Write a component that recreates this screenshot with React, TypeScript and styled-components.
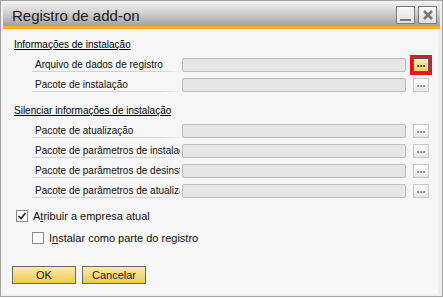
import * as React from 'react';
import styled, { createGlobalStyle } from 'styled-components';

const GlobalStyle = createGlobalStyle`
    html, body {
        margin: 0;
        padding: 0;
        background: #ffffff;
    }
    * {
        box-sizing: border-box;
    }
`

const Window = styled.div`
    width: 443px;
    height: 297px;
    border: 1px solid #a2a2a2;
    padding: 2px;
    background: #f1f1f1;
    display: flex;
    flex-direction: column;
    font-family: "Liberation Sans", Arial, sans-serif;
    font-size: 10px;
    color: #111;
`

const TitleBar = styled.div`
    height: 23px;
    display: flex;
    align-items: center;
    justify-content: space-between;
    padding: 0 3px 0 9px;
    background: linear-gradient(to bottom, #eeeeee 0%, #cfcfcf 45%, #a0a0a0 100%);
`

const Title = styled.div`
    font-size: 15px;
    color: #1c1c1c;
    padding-top: 1px;
`

const Controls = styled.div`
    display: flex;
    gap: 3px;
`

const CtrlButton = styled.div`
    width: 19px;
    height: 18px;
    border: 1px solid #7c7c7c;
    background: linear-gradient(to bottom, #fafafa, #dedede);
    display: flex;
    align-items: center;
    justify-content: center;
`

const Accent = styled.div`
    height: 3px;
    background: #f4b21b;
`

const Content = styled.div`
    flex: 1;
    background: #f6f6f6;
    border-right: 2px solid #ececec;
    padding: 9px 0 0 11px;
`

const SectionHeader = styled.div<{ $first?: boolean }>`
    height: 14px;
    line-height: 14px;
    text-decoration: underline;
    color: #000;
    margin-top: ${(p) => (p.$first ? 0 : 9)}px;
    margin-bottom: 3px;
`

const Row = styled.div`
    height: 20px;
    display: flex;
    align-items: center;
    margin-left: 18px;
`

const Label = styled.div`
    width: 148px;
    height: 14px;
    line-height: 13px;
    padding: 0 2px 0 3px;
    white-space: nowrap;
    overflow: hidden;
    color: #111;
    border-bottom: 1px solid;
    border-image: linear-gradient(to right, #d2d2d2 85%, rgba(210, 210, 210, 0)) 1;
`

const Field = styled.div`
    width: 224px;
    height: 14px;
    margin-left: 2px;
    border: 1px solid #bcbcbc;
    border-radius: 2px;
    background: #e6e6e6;
`

const BrowseButton = styled.div<{ $active?: boolean }>`
    width: 16px;
    height: 14px;
    margin-left: 7px;
    display: flex;
    align-items: center;
    justify-content: center;
    padding-top: 2px;
    border: 1px solid ${(p) => (p.$active ? '#5f5f5f' : '#c8c8c8')};
    background: ${(p) =>
        p.$active
            ? 'linear-gradient(to bottom, #fbeeb8, #f1cf62)'
            : 'linear-gradient(to bottom, #ffffff, #e6e6e6)'};
    outline: ${(p) => (p.$active ? '3px solid #e8141c' : 'none')};
`

const CheckRow = styled.div<{ $indent: number }>`
    height: 14px;
    display: flex;
    align-items: center;
    gap: 5px;
    margin-top: 8px;
    margin-left: ${(p) => p.$indent}px;
`

const Box = styled.div`
    width: 12px;
    height: 12px;
    border: 1px solid #8a8a8a;
    background: #ffffff;
    display: flex;
    align-items: center;
    justify-content: center;
`

const CheckLabel = styled.span`
    font-size: 11px;
    color: #111;
    u {
        text-decoration: underline;
    }
`

const Footer = styled.div`
    display: flex;
    gap: 6px;
    margin: 21px 0 0 -2px;
`

const ActionButton = styled.div`
    width: 64px;
    height: 18px;
    border: 1px solid #686868;
    background: linear-gradient(to bottom, #fbeaa9, #f0c955);
    display: flex;
    align-items: center;
    justify-content: center;
    font-size: 11px;
    color: #1a1a1a;
`

const Dots: React.FC<{ active?: boolean }> = ({ active }) => (
    <svg width="9" height="2" viewBox="0 0 9 2">
        {[0, 3, 6].map((x) => (
            <g key={x}>
                <rect x={x} y="0" width="1" height="2" fill={active ? '#9a3a3a' : '#b08a96'} />
                <rect x={x + 1} y="0" width="1" height="2" fill={active ? '#4a4a7a' : '#8a90b0'} />
            </g>
        ))}
    </svg>
)

const Browse: React.FC<{ active?: boolean }> = ({ active }) => (
    <BrowseButton $active={active}>
        <Dots active={active} />
    </BrowseButton>
)

const FieldRow: React.FC<{ label: string; active?: boolean }> = ({ label, active }) => (
    <Row>
        <Label>{label}</Label>
        <Field />
        <Browse active={active} />
    </Row>
)

export default function App() {
    return (
        <>
            <GlobalStyle />
            <Window>
                <TitleBar>
                    <Title>Registro de add-on</Title>
                    <Controls>
                        <CtrlButton>
                            <svg width="13" height="14" viewBox="0 0 13 14">
                                <rect x="1" y="11" width="11" height="2" fill="#777" />
                            </svg>
                        </CtrlButton>
                        <CtrlButton>
                            <svg width="12" height="12" viewBox="0 0 12 12">
                                <path d="M2 2 L10 10 M10 2 L2 10" stroke="#777" strokeWidth="2.6" />
                            </svg>
                        </CtrlButton>
                    </Controls>
                </TitleBar>
                <Accent />
                <Content>
                    <SectionHeader $first>Informações de instalação</SectionHeader>
                    <FieldRow label="Arquivo de dados de registro" active />
                    <FieldRow label="Pacote de instalação" />

                    <SectionHeader>Silenciar informações de instalação</SectionHeader>
                    <FieldRow label="Pacote de atualização" />
                    <FieldRow label="Pacote de parâmetros de instalação" />
                    <FieldRow label="Pacote de parâmetros de desinstalação" />
                    <FieldRow label="Pacote de parâmetros de atualização" />

                    <CheckRow $indent={2}>
                        <Box>
                            <svg width="10" height="10" viewBox="0 0 10 10">
                                <path d="M1.5 5 L4 7.5 L8.5 2" fill="none" stroke="#222" strokeWidth="1.6" />
                            </svg>
                        </Box>
                        <CheckLabel>A<u>t</u>ribuir a empresa atual</CheckLabel>
                    </CheckRow>
                    <CheckRow $indent={18}>
                        <Box />
                        <CheckLabel>I<u>n</u>stalar como parte do registro</CheckLabel>
                    </CheckRow>

                    <Footer>
                        <ActionButton>OK</ActionButton>
                        <ActionButton>Cancelar</ActionButton>
                    </Footer>
                </Content>
            </Window>
        </>
    )
}
